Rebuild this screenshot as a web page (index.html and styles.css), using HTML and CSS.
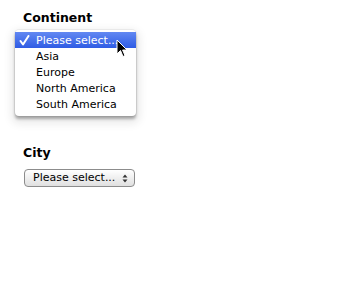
FILE: index.html
```html
<!DOCTYPE html>
<html lang="en">
<head>
    <meta charset="UTF-8">
    <title>Location</title>
    <link rel="stylesheet" href="styles.css">
</head>
<body>
    <div class="page">
        <div class="field">
            <div class="label">Continent</div>
            <div class="popup">
                <ul class="menu">
                    <li class="selected">
                        <svg class="check" width="11" height="11" viewBox="0 0 11 11">
                            <path d="M1.5 6 L4 9.5 L9.5 1" fill="none" stroke="#fff" stroke-width="2" stroke-linecap="round" stroke-linejoin="round"/>
                        </svg>Please select...</li>
                    <li>Asia</li>
                    <li>Europe</li>
                    <li>North America</li>
                    <li>South America</li>
                </ul>
                <svg class="cursor" width="12" height="19" viewBox="0 0 12 19">
                    <path d="M1 1 L1 15 L4.5 11.5 L7 17.5 L9 16.6 L6.6 11 L11 11 Z" fill="#000" stroke="#fff" stroke-width="1" stroke-linejoin="round"/>
                </svg>
            </div>
        </div>

        <div class="field city">
            <div class="label">City</div>
            <div class="select">
                <span>Please select...</span>
                <svg class="arrows" width="6" height="9" viewBox="0 0 6 9">
                    <path d="M0.5 3.5 L3 0.5 L5.5 3.5 Z M0.5 5.5 L3 8.5 L5.5 5.5 Z" fill="#333"/>
                </svg>
            </div>
        </div>
    </div>
</body>
</html>
```

FILE: styles.css
```css
body {
    margin: 0;
    font-family: 'DejaVu Sans', sans-serif;
    font-size: 11px;
    color: #000;
    background: #fff;
}
.page {
    padding: 10px 0 0 0;
}
.field {
    padding-left: 15px;
}
.label {
    font-weight: bold;
    font-size: 12.5px;
    padding-left: 8px;
    height: 20px;
}
.popup {
    position: relative;
    width: 121px;
}
.menu {
    list-style: none;
    margin: 0;
    padding: 2px 0 4px 0;
    background: #fff;
    border-radius: 4px;
    box-shadow: 0 0 0 1px rgba(0, 0, 0, 0.05), 0 3px 3px rgba(0, 0, 0, 0.3), 0 4px 8px 4px rgba(0, 0, 0, 0.08);
}
.menu li {
    height: 16px;
    line-height: 17px;
    padding-left: 21px;
    white-space: nowrap;
}
.menu li.selected {
    position: relative;
    color: #fff;
    background: linear-gradient(#6288f2, #2f5ce4);
}
.check {
    position: absolute;
    left: 4px;
    top: 3px;
}
.cursor {
    position: absolute;
    left: 101px;
    top: 9px;
}
.city {
    margin-top: 29px;
}
.select {
    margin: 4px 0 0 9px;
    width: 95px;
    height: 16px;
    border: 1px solid #8c8c8c;
    border-radius: 4px;
    background: linear-gradient(#ffffff, #ececec 60%, #e0e0e0);
    display: flex;
    align-items: center;
    justify-content: space-between;
    padding: 0 6px 0 8px;
    box-sizing: content-box;
}
.select span {
    line-height: 16px;
}
.arrows {
    display: block;
}
```
